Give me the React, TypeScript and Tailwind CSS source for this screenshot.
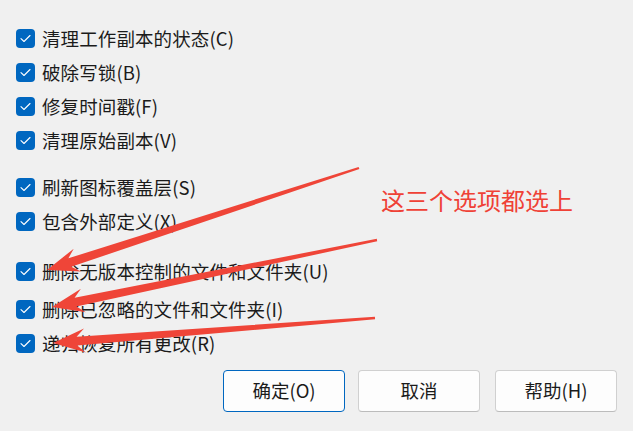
type Row = { label: string; mt: string }

const rows: Row[] = [
  { label: "清理工作副本的状态(C)", mt: "mt-[21px]" },
  { label: "破除写锁(B)", mt: "mt-0" },
  { label: "修复时间戳(F)", mt: "mt-0" },
  { label: "清理原始副本(V)", mt: "mt-0" },
  { label: "刷新图标覆盖层(S)", mt: "mt-[13px]" },
  { label: "包含外部定义(X)", mt: "mt-0" },
  { label: "删除无版本控制的文件和文件夹(U)", mt: "mt-[16px]" },
  { label: "删除已忽略的文件和文件夹(I)", mt: "mt-[4px]" },
  { label: "递归恢复所有更改(R)", mt: "mt-0" },
]

// tapered screenshot-tool arrow, tail -> tip
function arrowPoints(tx: number, ty: number, hx: number, hy: number) {
  const dx = hx - tx
  const dy = hy - ty
  const len = Math.hypot(dx, dy)
  const ux = dx / len
  const uy = dy / len
  const nx = -uy
  const ny = ux
  const headLen = 32
  const headW = 12
  const neckW = 4.5
  const tailW = 1.2
  const bx = hx - ux * headLen
  const by = hy - uy * headLen
  const nbx = hx - ux * (headLen - 8)
  const nby = hy - uy * (headLen - 8)
  const pts = [
    [tx + nx * tailW, ty + ny * tailW],
    [nbx + nx * neckW, nby + ny * neckW],
    [bx + nx * headW, by + ny * headW],
    [hx, hy],
    [bx - nx * headW, by - ny * headW],
    [nbx - nx * neckW, nby - ny * neckW],
    [tx - nx * tailW, ty - ny * tailW],
  ]
  return pts.map((p) => `${p[0].toFixed(1)},${p[1].toFixed(1)}`).join(" ")
}

function CheckBox() {
  return (
    <span className="flex h-[19px] w-[19px] shrink-0 items-center justify-center rounded-[4px] bg-[#0067c0]">
      <svg width="11" height="9" viewBox="0 0 11 9" fill="none">
        <path d="M1 4.6 L4 7.5 L10 1.5" stroke="white" strokeWidth="1.1" strokeLinecap="round" strokeLinejoin="round" />
      </svg>
    </span>
  )
}

export default function App() {
  return (
    <div
      className="relative h-[431px] w-[633px] overflow-hidden bg-[#f0f0f0] text-[#1b1b1b]"
      style={{ fontFamily: '"Noto Sans CJK SC", "Noto Sans", sans-serif' }}
    >
      <div className="flex flex-col pl-[16px]">
        {rows.map((r) => (
          <div key={r.label} className={`flex h-[34px] items-center gap-[7px] ${r.mt}`}>
            <CheckBox />
            <span className="text-[18.5px] leading-none tracking-[0.1px]">{r.label}</span>
          </div>
        ))}
      </div>

      <div className="mt-[10px] flex justify-end pr-[16px]">
        <button className="h-[42px] w-[122px] rounded-[4px] border border-[#0067c0] bg-[#fdfdfd] text-[18.5px]">
          确定(O)
        </button>
        <button className="ml-[13px] h-[42px] w-[122px] rounded-[4px] border border-[#d0d0d0] border-b-[#bcbcbc] bg-[#fdfdfd] text-[18.5px]">
          取消
        </button>
        <button className="ml-[15px] h-[42px] w-[122px] rounded-[4px] border border-[#d0d0d0] border-b-[#bcbcbc] bg-[#fdfdfd] text-[18.5px]">
          帮助(H)
        </button>
      </div>

      <div className="absolute left-[381px] top-[188px] text-[24px] leading-none text-[#ef4136]">
        这三个选项都选上
      </div>

      <svg className="pointer-events-none absolute left-0 top-0" width="633" height="431">
        <polygon points={arrowPoints(359, 168, 47, 270)} fill="#ef4538" />
        <polygon points={arrowPoints(377, 240, 52, 307)} fill="#ef4538" />
        <polygon points={arrowPoints(375, 318, 53, 343)} fill="#ef4538" />
      </svg>
    </div>
  )
}
